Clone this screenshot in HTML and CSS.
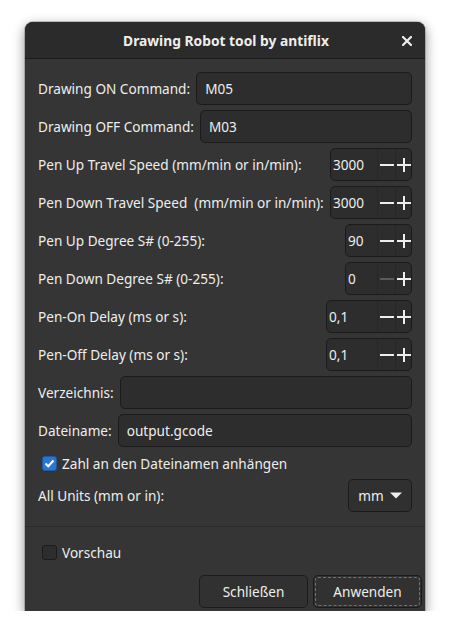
FILE: index.html
```html
<!DOCTYPE html>
<html>
<head>
<meta charset="utf-8">
<link rel="stylesheet" href="styles.css">
</head>
<body>
<div class="window">
  <header class="titlebar">
    <span class="title">Drawing Robot tool by antiflix</span>
    <span class="close"><svg width="10" height="10" viewBox="0 0 10 10"><path d="M1 1L9 9M9 1L1 9" stroke="#eeeeec" stroke-width="2.2" stroke-linecap="square"/></svg></span>
  </header>
  <main class="content">
    <div class="row"><span class="label">Drawing ON Command:</span><div class="entry">M05</div></div>
    <div class="row"><span class="label">Drawing OFF Command:</span><div class="entry">M03</div></div>
    <div class="row"><span class="label">Pen Up Travel Speed (mm/min or in/min):</span>
      <div class="spin spin-wide"><span class="val">3000</span><span class="sbtn minus"><svg width="14" height="14"><rect x="0" y="6" width="14" height="2"/></svg></span><span class="sbtn plus"><svg width="14" height="14"><rect x="0" y="6" width="14" height="2"/><rect x="6" y="0" width="2" height="14"/></svg></span></div></div>
    <div class="row"><span class="label">Pen Down Travel Speed  (mm/min or in/min):</span>
      <div class="spin spin-wide"><span class="val">3000</span><span class="sbtn minus"><svg width="14" height="14"><rect x="0" y="6" width="14" height="2"/></svg></span><span class="sbtn plus"><svg width="14" height="14"><rect x="0" y="6" width="14" height="2"/><rect x="6" y="0" width="2" height="14"/></svg></span></div></div>
    <div class="row"><span class="label">Pen Up Degree S# (0-255):</span>
      <div class="spin spin-narrow"><span class="val">90</span><span class="sbtn minus"><svg width="14" height="14"><rect x="0" y="6" width="14" height="2"/></svg></span><span class="sbtn plus"><svg width="14" height="14"><rect x="0" y="6" width="14" height="2"/><rect x="6" y="0" width="2" height="14"/></svg></span></div></div>
    <div class="row"><span class="label">Pen Down Degree S# (0-255):</span>
      <div class="spin spin-narrow"><span class="val">0</span><span class="sbtn minus disabled"><svg width="14" height="14"><rect x="0" y="6" width="14" height="2"/></svg></span><span class="sbtn plus"><svg width="14" height="14"><rect x="0" y="6" width="14" height="2"/><rect x="6" y="0" width="2" height="14"/></svg></span></div></div>
    <div class="row"><span class="label">Pen-On Delay (ms or s):</span>
      <div class="spin spin-mid"><span class="val">0,1</span><span class="sbtn minus"><svg width="14" height="14"><rect x="0" y="6" width="14" height="2"/></svg></span><span class="sbtn plus"><svg width="14" height="14"><rect x="0" y="6" width="14" height="2"/><rect x="6" y="0" width="2" height="14"/></svg></span></div></div>
    <div class="row"><span class="label">Pen-Off Delay (ms or s):</span>
      <div class="spin spin-mid"><span class="val">0,1</span><span class="sbtn minus"><svg width="14" height="14"><rect x="0" y="6" width="14" height="2"/></svg></span><span class="sbtn plus"><svg width="14" height="14"><rect x="0" y="6" width="14" height="2"/><rect x="6" y="0" width="2" height="14"/></svg></span></div></div>
    <div class="row"><span class="label">Verzeichnis:</span><div class="entry"></div></div>
    <div class="row"><span class="label">Dateiname:</span><div class="entry">output.gcode</div></div>
    <div class="check-row">
      <span class="checkbox checked"><svg width="15" height="15" viewBox="0 0 15 15"><path d="M3.5 7.5L6.2 10.2L11.5 4.5" fill="none" stroke="#ffffff" stroke-width="2.2"/></svg></span>
      <span class="check-label">Zahl an den Dateinamen anhängen</span>
    </div>
    <div class="row"><span class="label">All Units (mm or in):</span>
      <div class="combo"><span>mm</span><svg width="12" height="7" viewBox="0 0 12 7"><path d="M0 0.5H12L6 6.5Z" fill="#eeeeec"/></svg></div>
    </div>
  </main>
  <div class="separator"></div>
  <footer class="footer">
    <div class="check-row">
      <span class="checkbox"></span>
      <span class="check-label">Vorschau</span>
    </div>
    <div class="buttons">
      <div class="button">Schließen</div>
      <div class="button focused">Anwenden</div>
    </div>
  </footer>
</div>
</body>
</html>
```
FILE: styles.css
```css
html, body {
  margin: 0;
  padding: 0;
  background: #ffffff;
}
body {
  padding: 22px 26px 0 25px;
  font-family: "Noto Sans", "Open Sans", sans-serif;
  font-size: 13.6px;
  color: #eeeeec;
}
.window {
  width: 400px;
  height: 589px;
  background: #353535;
  border-radius: 8px 8px 0 0;
  box-shadow: 0 4px 12px 1px rgba(0, 0, 0, 0.4), 0 0 0 1px rgba(0, 0, 0, 0.18);
  display: flex;
  flex-direction: column;
  overflow: hidden;
}
.titlebar {
  height: 36px;
  border-bottom: 1px solid #1b1b1b;
  background: #2b2b2b;
  position: relative;
  display: flex;
  align-items: center;
  justify-content: center;
  flex-shrink: 0;
}
.title {
  font-weight: bold;
  font-size: 13.8px;
  padding-left: 2px;
}
.close {
  position: absolute;
  right: 13px;
  top: 14px;
  width: 10px;
  height: 10px;
  display: flex;
}
.content {
  padding: 13px 13px 14px 13px;
  display: flex;
  flex-direction: column;
  gap: 5px;
}
.row {
  display: flex;
  align-items: center;
  height: 33px;
}
.label {
  white-space: pre;
}
.entry {
  flex: 1;
  height: 33px;
  box-sizing: border-box;
  margin-left: 6px;
  border: 1px solid #1b1b1b;
  border-radius: 5px;
  background: #2d2d2d;
  padding: 0 8px;
  display: flex;
  align-items: center;
}
.spin {
  margin-left: auto;
  flex-shrink: 0;
  height: 33px;
  box-sizing: border-box;
  border: 1px solid #1b1b1b;
  border-radius: 5px;
  background: #2d2d2d;
  display: flex;
  align-items: stretch;
}
.spin-wide { width: 82px; }
.spin-narrow { width: 67px; }
.spin-mid { width: 86px; }
.val {
  flex: 1;
  padding-left: 2px;
  display: flex;
  align-items: center;
}
.sbtn {
  display: flex;
  align-items: center;
  justify-content: center;
  border-left: 1px solid #272727;
  fill: #eeeeec;
}
.sbtn.minus { width: 17px; }
.sbtn.plus { width: 15px; }
.sbtn.disabled { fill: #5b5b5b; }
.check-row {
  display: flex;
  align-items: center;
  height: 22px;
  padding-left: 4px;
}
.checkbox {
  width: 15px;
  height: 15px;
  box-sizing: border-box;
  border: 1px solid #1b1b1b;
  border-radius: 3px;
  background: #2d2d2d;
  display: flex;
  align-items: center;
  justify-content: center;
}
.checkbox.checked {
  background: #2a76d0;
  border-color: #1d5aa5;
}
.checkbox.checked svg {
  margin: -1px;
}
.check-label {
  margin-left: 5px;
}
.combo {
  margin-left: auto;
  width: 64px;
  height: 33px;
  box-sizing: border-box;
  border: 1px solid #1b1b1b;
  border-radius: 5px;
  background: #303030;
  display: flex;
  align-items: center;
  justify-content: center;
  gap: 6px;
}
.separator {
  height: 1px;
  background: #2a2a2a;
}
.footer {
  padding: 14px 3px 2px 13px;
  display: flex;
  flex-direction: column;
  gap: 12px;
}
.buttons {
  display: flex;
  justify-content: flex-end;
  gap: 5px;
}
.button {
  width: 109px;
  height: 33px;
  box-sizing: border-box;
  border: 1px solid #1b1b1b;
  border-radius: 5px;
  background: #313131;
  display: flex;
  align-items: center;
  justify-content: center;
}
.button.focused {
  outline: 1px dashed rgba(238, 238, 236, 0.35);
  outline-offset: -3px;
}
```
